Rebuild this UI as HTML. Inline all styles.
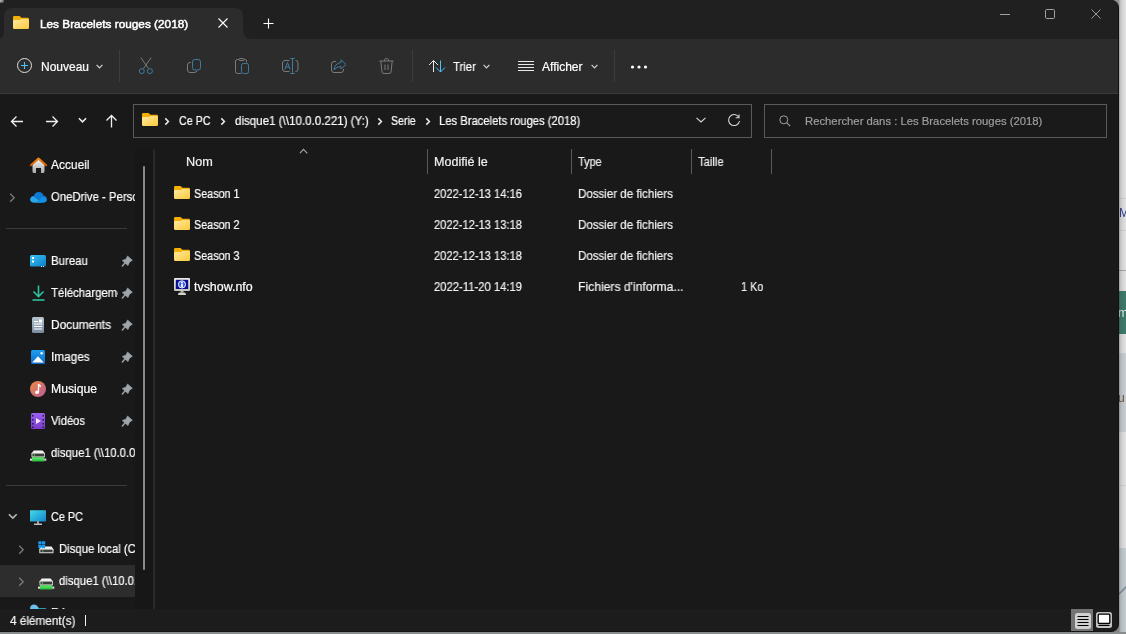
<!DOCTYPE html>
<html><head><meta charset="utf-8">
<style>
*{margin:0;padding:0;box-sizing:border-box}
html,body{width:1126px;height:634px;overflow:hidden;background:#e4e4e4;font-family:"Liberation Sans",sans-serif;color:#fff}
.a{position:absolute}
svg.a{overflow:visible}
.t{position:absolute;white-space:nowrap;line-height:16px;font-size:12px;color:#fff;-webkit-text-stroke:0.2px currentColor;will-change:transform}
#win{position:absolute;left:0;top:0;width:1119px;height:632px;background:#191919;border-radius:0 8px 8px 0;overflow:hidden;border-right:1px solid #121212;border-bottom:1px solid #141414}
.sep{position:absolute;width:1px;background:#3d3d3d}
.nav{font-size:12px}
.hd{color:#f0f0f0}
</style></head>
<body>
<!-- outside right strip -->
<div class="a" style="left:1110px;top:0;width:16px;height:634px;overflow:hidden;background:#e3e3e3">
  <div class="a" style="left:0;top:198px;width:16px;height:1px;background:#d2d2d2"></div>
  <div class="t" style="left:9px;top:205px;font-size:12px;color:#2a3a8a;-webkit-text-stroke:0">Mo</div>
  <div class="a" style="left:0;top:230px;width:16px;height:1px;background:#d2d2d2"></div>
  <div class="a" style="left:0;top:270px;width:16px;height:1px;background:#a8a8a8"></div>
  <div class="a" style="left:0;top:291px;width:16px;height:43px;background:#3b7b6a"></div>
  <div class="t" style="left:8px;top:305px;font-size:12px;color:#e8f0f0;-webkit-text-stroke:0">m</div>
  <div class="a" style="left:0;top:353px;width:16px;height:79px;background:#cacfd3"></div>
  <div class="t" style="left:8px;top:390px;font-size:12px;color:#6a5030;-webkit-text-stroke:0">u</div>
  <div class="a" style="left:0;top:485px;width:16px;height:1px;background:#d4d4d4"></div>
  <div class="a" style="left:0;top:548px;width:16px;height:86px;background:#c6cdd1"></div>
  <svg class="a" style="left:0;top:580px" width="16" height="20" viewBox="0 0 16 20"><path d="M8 15L17 6" stroke="#7f8ea2" stroke-width="1.6"/></svg>
  <div class="a" style="left:0;top:0;width:16px;height:634px;background:linear-gradient(90deg,rgba(50,50,50,.5) 0,rgba(50,50,50,.45) 9px,rgba(60,60,60,.22) 10px,rgba(60,60,60,.1) 12px,rgba(60,60,60,0) 16px)"></div>
</div>
<div class="a" style="left:0;top:632px;width:1126px;height:2px;background:#888c8c"></div>


<div id="win">
  <!-- TAB STRIP -->
  <div class="a" style="left:0;top:0;width:1119px;height:39px;background:#202020"></div>
  <div class="a" style="left:0;top:31px;width:260px;height:8px;background:#2c2c2c"></div>
  <div class="a" style="left:-4px;top:23px;width:8px;height:16px;background:#202020;border-radius:0 0 6px 0"></div>
  <div class="a" style="left:243px;top:23px;width:876px;height:16px;background:#202020;border-radius:0 0 0 8px"></div>
  <div class="a" style="left:4px;top:8px;width:239px;height:40px;background:#2c2c2c;border-radius:8px 8px 0 0"></div>
  <!-- tab folder icon -->
  <svg class="a" style="left:13px;top:16px" width="16" height="13" viewBox="0 0 16 13">
    <defs><linearGradient id="fg" x1="0" y1="0" x2="1" y2="1"><stop offset="0" stop-color="#ffeaa4"/><stop offset="1" stop-color="#fcc838"/></linearGradient></defs>
    <path d="M1.3 0H6.6L8.4 1.8H14.7Q16 1.8 16 3.1V7H0V1.3Q0 0 1.3 0Z" fill="#f2b008"/>
    <path d="M0 5.3Q0 4.1 1.2 4.1H7.2L8.2 3.1H14.7Q16 3.1 16 4.4V11.7Q16 13 14.7 13H1.3Q0 13 0 11.7Z" fill="url(#fg)"/>
  </svg>
  <div class="t" style="left:40px;top:16px;font-size:11.8px;-webkit-text-stroke:0.5px #fff">Les Bracelets rouges (2018)</div>
  <svg class="a" style="left:218px;top:18px" width="10" height="10" viewBox="0 0 10 10"><path d="M0.5 0.5L9.5 9.5M9.5 0.5L0.5 9.5" stroke="#fff" stroke-width="1.1"/></svg>
  <svg class="a" style="left:263px;top:18px" width="11" height="11" viewBox="0 0 11 11"><path d="M5.5 0.5V10.5M0.5 5.5H10.5" stroke="#fff" stroke-width="1.1"/></svg>
  <!-- caption buttons -->
  <svg class="a" style="left:1000px;top:14px" width="10" height="1" viewBox="0 0 10 1"><path d="M0 0.5H10" stroke="#a0a0a0" stroke-width="1"/></svg>
  <svg class="a" style="left:1045px;top:9px" width="10" height="10" viewBox="0 0 10 10"><rect x="0.5" y="0.5" width="9" height="9" rx="1.2" fill="none" stroke="#a0a0a0" stroke-width="1"/></svg>
  <svg class="a" style="left:1091px;top:9px" width="10" height="10" viewBox="0 0 10 10"><path d="M0.5 0.5L9.5 9.5M9.5 0.5L0.5 9.5" stroke="#9a9a9a" stroke-width="1"/></svg>

  <!-- COMMAND BAR -->
  <div class="a" style="left:0;top:39px;width:1119px;height:54px;background:#2c2c2c"></div>
  <div class="a" style="left:0;top:93px;width:1119px;height:1px;background:#3a3a3a"></div>
  <svg class="a" style="left:17px;top:58px" width="15" height="15" viewBox="0 0 15 15"><circle cx="7.5" cy="7.5" r="7" fill="none" stroke="#e0e0e0" stroke-width="1"/><path d="M7.5 4V11M4 7.5H11" stroke="#4cc2ff" stroke-width="1.1"/></svg>
  <div class="t" style="transform:scaleX(0.998);transform-origin:0 0;font-size:12px;left:41px;top:59px">Nouveau</div>
  <svg class="a" style="left:96px;top:64px" width="7" height="5" viewBox="0 0 7 5"><path d="M0.6 0.9L3.5 3.8L6.4 0.9" fill="none" stroke="#d4d4d4" stroke-width="1.2"/></svg>
  <div class="sep" style="left:119px;top:50px;height:32px"></div>
  <!-- scissors -->
  <svg class="a" style="left:138px;top:57px" width="16" height="17" viewBox="0 0 16 17"><path d="M2.8 0.5L10.5 11.5M13.2 0.5L5.5 11.5" stroke="#7a7a7a" stroke-width="1"/><circle cx="3.8" cy="14.1" r="2.5" fill="none" stroke="#3f7aa0" stroke-width="1"/><circle cx="11.9" cy="14.1" r="2.5" fill="none" stroke="#3f7aa0" stroke-width="1"/></svg>
  <!-- copy -->
  <svg class="a" style="left:187px;top:59px" width="15" height="15" viewBox="0 0 15 15"><path d="M4 3.5H3Q0.5 3.5 0.5 6V11Q0.5 13.5 3 13.5H7Q9.5 13.5 10 12" fill="none" stroke="#7a7a7a" stroke-width="1"/><rect x="5.5" y="0.5" width="8" height="10.5" rx="2.3" fill="none" stroke="#3f7aa0" stroke-width="1"/></svg>
  <!-- paste -->
  <svg class="a" style="left:235px;top:58px" width="15" height="17" viewBox="0 0 15 17"><path d="M6 15.5H2.5Q0.5 15.5 0.5 13.5V3Q0.5 1.5 2.5 1.5H4M9 1.5H10.5Q11.5 1.5 11.5 3V4.5" fill="none" stroke="#7a7a7a" stroke-width="1"/><rect x="4" y="0.5" width="5" height="2" rx="1" fill="none" stroke="#7a7a7a" stroke-width="1"/><rect x="6.5" y="5.5" width="7" height="10" rx="1.8" fill="none" stroke="#3f7aa0" stroke-width="1"/></svg>
  <!-- rename -->
  <svg class="a" style="left:282px;top:58px" width="17" height="17" viewBox="0 0 17 17"><path d="M7.5 2.5H3Q0.5 2.5 0.5 5V11Q0.5 13.5 3 13.5H7.5M13.5 2.5Q16 2.5 16 5V11Q16 13.5 13.5 13.5" fill="none" stroke="#7a7a7a" stroke-width="1"/><path d="M10.5 0.5V15.5M8.3 0.5H12.7M8.3 15.5H12.7M2.8 11.5L5.5 4.5L8.2 11.5M3.8 9H7.2" fill="none" stroke="#3f7aa0" stroke-width="1"/></svg>
  <!-- share -->
  <svg class="a" style="left:331px;top:59px" width="16" height="15" viewBox="0 0 16 15"><path d="M5 2.5H3Q0.5 2.5 0.5 5V11Q0.5 13.5 3 13.5H10Q12.5 13.5 12.5 11V10" fill="none" stroke="#7a7a7a" stroke-width="1"/><path d="M10 0.8L15 5.5L10 10V7.5Q5.5 7.5 3 11Q3.5 4.5 10 3.5Z" fill="none" stroke="#3f7aa0" stroke-width="1" stroke-linejoin="round"/></svg>
  <!-- delete -->
  <svg class="a" style="left:379px;top:58px" width="15" height="17" viewBox="0 0 15 17"><path d="M0.5 3H14.5M5.5 3V1.8Q5.5 0.5 7.5 0.5Q9.5 0.5 9.5 1.8V3M1.8 3L3 14Q3.2 15.5 5 15.5H10Q11.8 15.5 12 14L13.2 3M6 6.5V12M9 6.5V12" fill="none" stroke="#7a7a7a" stroke-width="1"/></svg>
  <div class="sep" style="left:412px;top:50px;height:32px"></div>
  <!-- trier -->
  <svg class="a" style="left:428px;top:60px" width="18" height="13" viewBox="0 0 18 13"><path d="M5.5 0.5V12M1 5L5.5 0.5L10 5" fill="none" stroke="#e8e8e8" stroke-width="1"/><path d="M12.5 0.5V12M8 7.5L12.5 12L17 7.5" fill="none" stroke="#4cc2ff" stroke-width="1"/></svg>
  <div class="t" style="transform:scaleX(0.940);transform-origin:0 0;font-size:12px;left:453px;top:59px">Trier</div>
  <svg class="a" style="left:483px;top:64px" width="7" height="5" viewBox="0 0 7 5"><path d="M0.6 0.9L3.5 3.8L6.4 0.9" fill="none" stroke="#d4d4d4" stroke-width="1.2"/></svg>
  <!-- afficher -->
  <svg class="a" style="left:518px;top:61px" width="16" height="11" viewBox="0 0 16 11"><path d="M0 0.5H16M0 3.5H16M0 6.5H16M0 9.5H16" stroke="#e8e8e8" stroke-width="1"/></svg>
  <div class="t" style="transform:scaleX(1.002);transform-origin:0 0;font-size:12px;left:542px;top:59px">Afficher</div>
  <svg class="a" style="left:591px;top:64px" width="7" height="5" viewBox="0 0 7 5"><path d="M0.6 0.9L3.5 3.8L6.4 0.9" fill="none" stroke="#d4d4d4" stroke-width="1.2"/></svg>
  <div class="sep" style="left:614px;top:50px;height:32px"></div>
  <svg class="a" style="left:630px;top:65px" width="18" height="4" viewBox="0 0 18 4"><circle cx="2.5" cy="2" r="1.6" fill="#fff"/><circle cx="9" cy="2" r="1.6" fill="#fff"/><circle cx="15.5" cy="2" r="1.6" fill="#fff"/></svg>

  <!-- ADDRESS ROW -->
  <svg class="a" style="left:10px;top:115px" width="14" height="13" viewBox="0 0 14 13"><path d="M1.8 6.5H13M6.5 1.5L1.5 6.5L6.5 11.5" fill="none" stroke="#f0f0f0" stroke-width="1.3"/></svg>
  <svg class="a" style="left:45px;top:115px" width="14" height="13" viewBox="0 0 14 13"><path d="M1 6.5H12.2M7.5 1.5L12.5 6.5L7.5 11.5" fill="none" stroke="#f0f0f0" stroke-width="1.3"/></svg>
  <svg class="a" style="left:78px;top:117px" width="10" height="7" viewBox="0 0 10 7"><path d="M0.9 1.3L4.5 4.9L8.1 1.3" fill="none" stroke="#f0f0f0" stroke-width="1.5"/></svg>
  <svg class="a" style="left:105px;top:114px" width="13" height="14" viewBox="0 0 13 14"><path d="M6.5 1.8V13.5M1.5 6.5L6.5 1.5L11.5 6.5" fill="none" stroke="#f0f0f0" stroke-width="1.3"/></svg>
  <div class="a" style="left:133px;top:104px;width:619px;height:34px;border:1px solid #5a5a5a;background:#1a1a1a"></div>
  <svg class="a" style="left:142px;top:113px" width="16" height="13" viewBox="0 0 16 13">
    <path d="M1.3 0H6.6L8.4 1.8H14.7Q16 1.8 16 3.1V7H0V1.3Q0 0 1.3 0Z" fill="#f2b008"/>
    <path d="M0 5.3Q0 4.1 1.2 4.1H7.2L8.2 3.1H14.7Q16 3.1 16 4.4V11.7Q16 13 14.7 13H1.3Q0 13 0 11.7Z" fill="url(#fg)"/>
  </svg>
  <svg class="a" style="left:164px;top:117px" width="6" height="9" viewBox="0 0 6 9"><path d="M1.3 1.4L4.4 4.5L1.3 7.6" fill="none" stroke="#ececec" stroke-width="1.5"/></svg>
  <div class="t" style="transform:scaleX(0.891);transform-origin:0 0;font-size:12px;left:179px;top:113px">Ce PC</div>
  <svg class="a" style="left:220px;top:117px" width="6" height="9" viewBox="0 0 6 9"><path d="M1.3 1.4L4.4 4.5L1.3 7.6" fill="none" stroke="#ececec" stroke-width="1.5"/></svg>
  <div class="t" style="transform:scaleX(0.964);transform-origin:0 0;font-size:12px;left:234.5px;top:113px">disque1 (\\10.0.0.221) (Y:)</div>
  <svg class="a" style="left:377px;top:117px" width="6" height="9" viewBox="0 0 6 9"><path d="M1.3 1.4L4.4 4.5L1.3 7.6" fill="none" stroke="#ececec" stroke-width="1.5"/></svg>
  <div class="t" style="transform:scaleX(0.882);transform-origin:0 0;font-size:12px;left:391px;top:113px">Serie</div>
  <svg class="a" style="left:425px;top:117px" width="6" height="9" viewBox="0 0 6 9"><path d="M1.3 1.4L4.4 4.5L1.3 7.6" fill="none" stroke="#ececec" stroke-width="1.5"/></svg>
  <div class="t" style="transform:scaleX(0.937);transform-origin:0 0;font-size:12px;left:439px;top:113px">Les Bracelets rouges (2018)</div>
  <svg class="a" style="left:696px;top:117px" width="10" height="6" viewBox="0 0 10 6"><path d="M0.5 0.8L5 5L9.5 0.8" fill="none" stroke="#d8d8d8" stroke-width="1.1"/></svg>
  <svg class="a" style="left:727px;top:114px" width="14" height="13" viewBox="0 0 14 13"><path d="M11.8 3.2A5.5 5.5 0 1 0 12.5 7" fill="none" stroke="#d8d8d8" stroke-width="1.1"/><path d="M12 0.5V3.8H8.7" fill="none" stroke="#d8d8d8" stroke-width="1.1"/></svg>
  <div class="a" style="left:764px;top:104px;width:343px;height:34px;border:1px solid #5a5a5a;background:#1a1a1a"></div>
  <svg class="a" style="left:779px;top:115px" width="12" height="12" viewBox="0 0 12 12"><circle cx="4.8" cy="4.8" r="4" fill="none" stroke="#a0a0a0" stroke-width="1"/><path d="M7.8 7.8L11.2 11.2" stroke="#a0a0a0" stroke-width="1.1"/></svg>
  <div class="t" style="left:805px;top:113px;color:#9e9e9e;font-size:11.3px">Rechercher dans : Les Bracelets rouges (2018)</div>


  <!-- NAV PANE -->
    <!-- nav scroll track + separator -->
  <div class="a" style="left:135px;top:149px;width:18px;height:460px;background:#171717"></div>
  <div class="a" style="left:143px;top:166px;width:2px;height:404px;background:#8a8a8a;border-radius:1px"></div>
  <div class="a" style="left:153px;top:149px;width:2px;height:460px;background:#2a2a2a"></div>
  <!-- Accueil -->
  <svg class="a" style="left:30px;top:157px" width="17" height="17" viewBox="0 0 17 17">
    <defs><linearGradient id="hg" x1="0" y1="0" x2="0" y2="1"><stop offset="0" stop-color="#f0f0f0"/><stop offset="1" stop-color="#a8a8a8"/></linearGradient>
    <linearGradient id="ob" x1="0" y1="0" x2="0" y2="1"><stop offset="0" stop-color="#f08a10"/><stop offset="1" stop-color="#e05a00"/></linearGradient></defs>
    <path d="M2.5 7.5L8.5 2.5L14.5 7.5V14.5Q14.5 16 13 16H11V11H6V16H4Q2.5 16 2.5 14.5Z" fill="url(#hg)"/>
    <path d="M0.8 8.3L8.5 1.5L16.2 8.3" fill="none" stroke="url(#ob)" stroke-width="2" stroke-linecap="round" stroke-linejoin="round"/>
  </svg>
  <div class="t nav" style="transform:scaleX(0.995);transform-origin:0 0;left:51px;top:157px;font-size:12px">Accueil</div>
  <!-- OneDrive -->
  <svg class="a" style="left:9px;top:193px" width="7" height="10" viewBox="0 0 7 10"><path d="M1.2 0.8L5.2 4.8L1.2 8.8" fill="none" stroke="#7c7c7c" stroke-width="1.3"/></svg>
  <svg class="a" style="left:30px;top:191px" width="17" height="12" viewBox="0 0 17 12">
    <path d="M4 11.5Q0.3 11.5 0.3 8.3Q0.3 5.2 3.8 5Q5 1 9 1Q12.5 1 13.5 4.5Q16.7 5 16.7 8.2Q16.7 11.5 13.3 11.5Z" fill="#0f7ad4"/>
    <path d="M4 11.5Q0.3 11.5 0.3 8.3Q0.3 6 3 5.3L12 11.5Z" fill="#28a8ea"/>
    <path d="M6 11.5L12.5 6Q16.7 5.8 16.7 8.8Q16.7 11.5 13.3 11.5Z" fill="#1490df"/>
  </svg>
  <div class="a" style="left:51px;top:189px;width:84px;height:18px;overflow:hidden"><div class="t nav" style="left:0;top:0;font-size:12.2px;transform:scaleX(0.93);transform-origin:0 0">OneDrive - Personnel</div></div>
  <div class="a" style="left:6px;top:485px;width:121px;height:1px;background:#3a3a3a"></div>
  <div class="a" style="left:6px;top:228px;width:121px;height:1px;background:#3a3a3a"></div>
  <!-- Bureau -->
  <svg class="a" style="left:30px;top:255px" width="16" height="12" viewBox="0 0 16 12">
    <defs><linearGradient id="bg1" x1="0" y1="0" x2="1" y2="1"><stop offset="0" stop-color="#3cc4f4"/><stop offset="1" stop-color="#0a7cc8"/></linearGradient></defs>
    <rect x="0" y="0" width="16" height="11.5" rx="1.5" fill="url(#bg1)"/>
    <rect x="2" y="2" width="2" height="2" fill="#fff"/><rect x="2" y="5.5" width="2" height="2" fill="#fff"/>
    <rect x="11" y="11" width="1" height="1" fill="#ddd"/><rect x="13" y="11" width="1" height="1" fill="#ddd"/>
  </svg>
  <div class="t nav" style="transform:scaleX(0.955);transform-origin:0 0;left:51px;top:253px;font-size:12px">Bureau</div>
  <!-- Telechargements -->
  <svg class="a" style="left:32px;top:285px" width="13" height="16" viewBox="0 0 13 16"><path d="M6.5 0.5V11M1.5 6.5L6.5 11.5L11.5 6.5" fill="none" stroke="#2ec29c" stroke-width="1.6"/><path d="M0.5 15H12.5" stroke="#2ec29c" stroke-width="1.6"/></svg>
  <div class="a" style="left:51px;top:285px;width:67px;height:18px;overflow:hidden"><div class="t nav" style="left:0;top:0;font-size:12.2px;transform:scaleX(0.93);transform-origin:0 0">Téléchargements</div></div>
  <!-- Documents -->
  <svg class="a" style="left:32px;top:317px" width="13" height="16" viewBox="0 0 13 16">
    <defs><linearGradient id="dg" x1="0" y1="0" x2="0" y2="1"><stop offset="0" stop-color="#b8c4d0"/><stop offset="1" stop-color="#7a8ca0"/></linearGradient></defs>
    <rect x="0" y="0" width="12" height="16" rx="1.5" fill="url(#dg)"/>
    <path d="M2 4.5H6M2 7H10M2 9.5H10M2 12H10" stroke="#fff" stroke-width="1"/><rect x="7" y="2.5" width="3" height="3" fill="#fff"/>
  </svg>
  <div class="t nav" style="transform:scaleX(0.989);transform-origin:0 0;left:51px;top:317px;font-size:12px">Documents</div>
  <!-- Images -->
  <svg class="a" style="left:31px;top:350px" width="15" height="15" viewBox="0 0 15 15">
    <defs><linearGradient id="ig" x1="0" y1="0" x2="0" y2="1"><stop offset="0" stop-color="#1e9ef0"/><stop offset="1" stop-color="#0c6cc8"/></linearGradient></defs>
    <rect x="0" y="0" width="14" height="14" rx="1.5" fill="url(#ig)"/>
    <path d="M1.2 12.5L7 6.2L12.8 12.5Z" fill="#fff"/><circle cx="10.6" cy="3.2" r="1.2" fill="#fff"/>
  </svg>
  <div class="t nav" style="transform:scaleX(0.984);transform-origin:0 0;left:51px;top:349px;font-size:12px">Images</div>
  <!-- Musique -->
  <svg class="a" style="left:30px;top:381px" width="16" height="16" viewBox="0 0 16 16">
    <defs><linearGradient id="mg" x1="0" y1="0" x2="1" y2="1"><stop offset="0" stop-color="#f08a40"/><stop offset="1" stop-color="#b85a98"/></linearGradient></defs>
    <circle cx="8" cy="8" r="8" fill="url(#mg)"/>
    <path d="M8.5 3V11" stroke="#fff" stroke-width="1.3"/><ellipse cx="7" cy="11.2" rx="2" ry="1.7" fill="#fff"/><path d="M8.5 3Q9 5 11 5.5" fill="none" stroke="#fff" stroke-width="1.3"/>
  </svg>
  <div class="t nav" style="transform:scaleX(1.016);transform-origin:0 0;left:51px;top:381px;font-size:12px">Musique</div>
  <!-- Videos -->
  <svg class="a" style="left:31px;top:413px" width="15" height="16" viewBox="0 0 15 16">
    <defs><linearGradient id="vg" x1="0" y1="0" x2="0" y2="1"><stop offset="0" stop-color="#9a5ef0"/><stop offset="1" stop-color="#7a3cc8"/></linearGradient></defs>
    <rect x="0" y="0" width="14" height="16" rx="1.5" fill="url(#vg)"/>
    <rect x="1" y="2" width="1.5" height="1.5" fill="#2a1650"/><rect x="1" y="6" width="1.5" height="1.5" fill="#2a1650"/><rect x="1" y="10" width="1.5" height="1.5" fill="#2a1650"/><rect x="1" y="13.5" width="1.5" height="1.5" fill="#2a1650"/>
    <rect x="11.5" y="2" width="1.5" height="1.5" fill="#2a1650"/><rect x="11.5" y="6" width="1.5" height="1.5" fill="#2a1650"/><rect x="11.5" y="10" width="1.5" height="1.5" fill="#2a1650"/><rect x="11.5" y="13.5" width="1.5" height="1.5" fill="#2a1650"/>
    <path d="M5 5V11L10 8Z" fill="#f0e8ff"/>
  </svg>
  <div class="t nav" style="transform:scaleX(0.930);transform-origin:0 0;left:51px;top:413px;font-size:12px">Vidéos</div>
  <!-- disque1 quick -->
  <svg class="a" style="left:30px;top:449.5px" width="17" height="12" viewBox="0 0 17 12">
    <defs><linearGradient id="drg" x1="0" y1="0" x2="0" y2="1"><stop offset="0" stop-color="#fafafa"/><stop offset="1" stop-color="#cfcfcf"/></linearGradient><linearGradient id="grg" x1="0" y1="0" x2="0" y2="1"><stop offset="0" stop-color="#66f070"/><stop offset="1" stop-color="#28b83a"/></linearGradient></defs>
    <path d="M3.8 0.5H12.5L15 3.2V7.3H1.5V3.2Z" fill="url(#drg)"/><rect x="2.4" y="3.6" width="11.8" height="2.8" fill="#3c3c3c"/><circle cx="4.4" cy="5" r="0.8" fill="#3cf04a"/>
    <rect x="2" y="7.2" width="12.3" height="4.3" fill="url(#grg)"/><rect x="0" y="8.6" width="2" height="2.1" fill="#e0e0e0"/><rect x="14.3" y="8.6" width="2" height="2.1" fill="#e0e0e0"/>
  </svg>
  <div class="a" style="left:51px;top:445px;width:84px;height:18px;overflow:hidden"><div class="t nav" style="left:0;top:0;font-size:12.2px;transform:scaleX(0.93);transform-origin:0 0">disque1 (\\10.0.0.221) (Y:)</div></div>
  <!-- pins -->
    <svg class="a" style="left:121px;top:255px" width="13" height="13" viewBox="0 0 13 13"><path d="M6.6 1L11.4 5.3L8.6 7L7 10.6L1.2 5.5L4.8 4.2Z" fill="#9ea6ac" stroke="#9ea6ac" stroke-width="0.6" stroke-linejoin="round"/><path d="M4 8L1.3 11" stroke="#9ea6ac" stroke-width="1.4" stroke-linecap="round"/></svg>
  <svg class="a" style="left:121px;top:287px" width="13" height="13" viewBox="0 0 13 13"><path d="M6.6 1L11.4 5.3L8.6 7L7 10.6L1.2 5.5L4.8 4.2Z" fill="#9ea6ac" stroke="#9ea6ac" stroke-width="0.6" stroke-linejoin="round"/><path d="M4 8L1.3 11" stroke="#9ea6ac" stroke-width="1.4" stroke-linecap="round"/></svg>
  <svg class="a" style="left:121px;top:319px" width="13" height="13" viewBox="0 0 13 13"><path d="M6.6 1L11.4 5.3L8.6 7L7 10.6L1.2 5.5L4.8 4.2Z" fill="#9ea6ac" stroke="#9ea6ac" stroke-width="0.6" stroke-linejoin="round"/><path d="M4 8L1.3 11" stroke="#9ea6ac" stroke-width="1.4" stroke-linecap="round"/></svg>
  <svg class="a" style="left:121px;top:351px" width="13" height="13" viewBox="0 0 13 13"><path d="M6.6 1L11.4 5.3L8.6 7L7 10.6L1.2 5.5L4.8 4.2Z" fill="#9ea6ac" stroke="#9ea6ac" stroke-width="0.6" stroke-linejoin="round"/><path d="M4 8L1.3 11" stroke="#9ea6ac" stroke-width="1.4" stroke-linecap="round"/></svg>
  <svg class="a" style="left:121px;top:383px" width="13" height="13" viewBox="0 0 13 13"><path d="M6.6 1L11.4 5.3L8.6 7L7 10.6L1.2 5.5L4.8 4.2Z" fill="#9ea6ac" stroke="#9ea6ac" stroke-width="0.6" stroke-linejoin="round"/><path d="M4 8L1.3 11" stroke="#9ea6ac" stroke-width="1.4" stroke-linecap="round"/></svg>
  <svg class="a" style="left:121px;top:415px" width="13" height="13" viewBox="0 0 13 13"><path d="M6.6 1L11.4 5.3L8.6 7L7 10.6L1.2 5.5L4.8 4.2Z" fill="#9ea6ac" stroke="#9ea6ac" stroke-width="0.6" stroke-linejoin="round"/><path d="M4 8L1.3 11" stroke="#9ea6ac" stroke-width="1.4" stroke-linecap="round"/></svg>

  <!-- Ce PC -->
  <svg class="a" style="left:8px;top:513px" width="10" height="7" viewBox="0 0 10 7"><path d="M0.9 1.2L4.8 5.1L8.7 1.2" fill="none" stroke="#b8b8b8" stroke-width="1.6"/></svg>
  <svg class="a" style="left:30px;top:510px" width="16" height="15" viewBox="0 0 16 15">
    <defs><linearGradient id="pcg" x1="0" y1="0" x2="1" y2="1"><stop offset="0" stop-color="#44dce8"/><stop offset="1" stop-color="#1284cc"/></linearGradient></defs>
    <rect x="0" y="0.2" width="16" height="11.4" rx="0.6" fill="url(#pcg)"/><rect x="7" y="11" width="2" height="3" fill="#9a9a9a"/><rect x="4" y="13.5" width="8" height="1.5" fill="#c0c0c0"/>
  </svg>
  <div class="t nav" style="transform:scaleX(0.903);transform-origin:0 0;left:51px;top:509px;font-size:12px">Ce PC</div>
  <!-- Disque local -->
  <svg class="a" style="left:18px;top:545px" width="7" height="10" viewBox="0 0 7 10"><path d="M1.2 0.8L5.2 4.8L1.2 8.8" fill="none" stroke="#7c7c7c" stroke-width="1.3"/></svg>
  <svg class="a" style="left:37.5px;top:540.5px" width="16" height="13" viewBox="0 0 16 13">
    <path d="M2.8 5.5H13.5L15.5 8.2V12.3H1.3V8.2Z" fill="url(#drg)"/><rect x="2.3" y="8.6" width="12.2" height="2.6" fill="#3c3c3c"/><circle cx="4.8" cy="9.9" r="0.7" fill="#3cf04a"/>
    <rect x="0.3" y="0.3" width="3.2" height="3.2" fill="#1a9af0"/><rect x="4" y="0.3" width="3.2" height="3.2" fill="#1a9af0"/><rect x="0.3" y="4" width="3.2" height="3.2" fill="#1a9af0"/><rect x="4" y="4" width="3.2" height="3.2" fill="#1a9af0"/>
  </svg>
  <div class="a" style="left:59px;top:541px;width:76px;height:18px;overflow:hidden"><div class="t nav" style="left:0;top:0;font-size:12.2px;transform:scaleX(0.93);transform-origin:0 0">Disque local (C:)</div></div>
  <!-- disque1 selected -->
  <div class="a" style="left:0;top:565px;width:135px;height:32px;background:#2d2d2d"></div>
  <svg class="a" style="left:18px;top:577px" width="7" height="10" viewBox="0 0 7 10"><path d="M1.2 0.8L5.2 4.8L1.2 8.8" fill="none" stroke="#7c7c7c" stroke-width="1.3"/></svg>
  <svg class="a" style="left:38px;top:577.5px" width="17" height="12" viewBox="0 0 17 12">
    <path d="M3.8 0.5H12.5L15 3.2V7.3H1.5V3.2Z" fill="url(#drg)"/><rect x="2.4" y="3.6" width="11.8" height="2.8" fill="#3c3c3c"/><circle cx="4.4" cy="5" r="0.8" fill="#3cf04a"/>
    <rect x="2" y="7.2" width="12.3" height="4.3" fill="url(#grg)"/><rect x="0" y="8.6" width="2" height="2.1" fill="#e0e0e0"/><rect x="14.3" y="8.6" width="2" height="2.1" fill="#e0e0e0"/>
  </svg>
  <div class="a" style="left:59px;top:573px;width:76px;height:18px;overflow:hidden"><div class="t nav" style="left:0;top:0;font-size:12.2px;transform:scaleX(0.93);transform-origin:0 0">disque1 (\\10.0.0.221) (Y:)</div></div>
  <!-- Reseau partial -->
  <svg class="a" style="left:29px;top:604px" width="18" height="14" viewBox="0 0 18 14"><path d="M1 5Q1 0.5 5 0.5Q8 0.5 10 4.5V6H1Z" fill="#6cc0ec"/><rect x="9.5" y="4" width="7.5" height="1.2" fill="#2a9ab0"/></svg>
  <div class="t nav" style="left:51px;top:604px;font-size:11.8px">Réseau</div>


  <!-- CONTENT -->
  
  <!-- header -->
  <div class="t hd" style="transform:scaleX(1.056);transform-origin:0 0;left:186px;top:154px;font-size:12px">Nom</div>
  <svg class="a" style="left:299px;top:148px" width="10" height="7" viewBox="0 0 10 7"><path d="M1 5.2L4.5 1.4L8.3 5.4" fill="none" stroke="#a8a8a8" stroke-width="1.1"/></svg>
  <div class="sep" style="left:427px;top:149px;height:25px;background:#5a5a5a"></div>
  <div class="t hd" style="transform:scaleX(1.045);transform-origin:0 0;left:434px;top:154px;font-size:12px">Modifié le</div>
  <div class="sep" style="left:571px;top:149px;height:25px;background:#5a5a5a"></div>
  <div class="t hd" style="transform:scaleX(0.908);transform-origin:0 0;left:578px;top:154px;font-size:12px">Type</div>
  <div class="sep" style="left:691px;top:149px;height:25px;background:#5a5a5a"></div>
  <div class="t hd" style="transform:scaleX(0.937);transform-origin:0 0;left:698px;top:154px;font-size:12px">Taille</div>
  <div class="sep" style="left:771px;top:149px;height:25px;background:#5a5a5a"></div>
  <svg class="a" style="left:174px;top:186px" width="16" height="13" viewBox="0 0 16 13">
    <path d="M1.3 0H6.6L8.4 1.8H14.7Q16 1.8 16 3.1V7H0V1.3Q0 0 1.3 0Z" fill="#f2b008"/>
    <path d="M0 5.3Q0 4.1 1.2 4.1H7.2L8.2 3.1H14.7Q16 3.1 16 4.4V11.7Q16 13 14.7 13H1.3Q0 13 0 11.7Z" fill="url(#fg)"/>
  </svg>
  <div class="t" style="transform:scaleX(0.877);transform-origin:0 0;left:194px;top:186px;font-size:12.3px">Season 1</div>
  <div class="t" style="transform:scaleX(0.905);transform-origin:0 0;left:434px;top:186px;font-size:12.3px;color:#f2f2f2">2022-12-13 14:16</div>
  <div class="t" style="transform:scaleX(0.938);transform-origin:0 0;left:578px;top:186px;font-size:12.3px;color:#f2f2f2">Dossier de fichiers</div>
  <svg class="a" style="left:174px;top:217px" width="16" height="13" viewBox="0 0 16 13">
    <path d="M1.3 0H6.6L8.4 1.8H14.7Q16 1.8 16 3.1V7H0V1.3Q0 0 1.3 0Z" fill="#f2b008"/>
    <path d="M0 5.3Q0 4.1 1.2 4.1H7.2L8.2 3.1H14.7Q16 3.1 16 4.4V11.7Q16 13 14.7 13H1.3Q0 13 0 11.7Z" fill="url(#fg)"/>
  </svg>
  <div class="t" style="transform:scaleX(0.877);transform-origin:0 0;left:194px;top:217px;font-size:12.3px">Season 2</div>
  <div class="t" style="transform:scaleX(0.905);transform-origin:0 0;left:434px;top:217px;font-size:12.3px;color:#f2f2f2">2022-12-13 13:18</div>
  <div class="t" style="transform:scaleX(0.938);transform-origin:0 0;left:578px;top:217px;font-size:12.3px;color:#f2f2f2">Dossier de fichiers</div>
  <svg class="a" style="left:174px;top:248px" width="16" height="13" viewBox="0 0 16 13">
    <path d="M1.3 0H6.6L8.4 1.8H14.7Q16 1.8 16 3.1V7H0V1.3Q0 0 1.3 0Z" fill="#f2b008"/>
    <path d="M0 5.3Q0 4.1 1.2 4.1H7.2L8.2 3.1H14.7Q16 3.1 16 4.4V11.7Q16 13 14.7 13H1.3Q0 13 0 11.7Z" fill="url(#fg)"/>
  </svg>
  <div class="t" style="transform:scaleX(0.877);transform-origin:0 0;left:194px;top:248px;font-size:12.3px">Season 3</div>
  <div class="t" style="transform:scaleX(0.905);transform-origin:0 0;left:434px;top:248px;font-size:12.3px;color:#f2f2f2">2022-12-13 13:18</div>
  <div class="t" style="transform:scaleX(0.938);transform-origin:0 0;left:578px;top:248px;font-size:12.3px;color:#f2f2f2">Dossier de fichiers</div>
  <svg class="a" style="left:174px;top:278px" width="16" height="17" viewBox="0 0 16 17">
    <defs><linearGradient id="ng" x1="0" y1="0" x2="0" y2="1"><stop offset="0" stop-color="#ecece6"/><stop offset="1" stop-color="#c4c4bc"/></linearGradient></defs>
    <rect x="0" y="0" width="16" height="13" rx="1" fill="url(#ng)"/><rect x="1.8" y="1.8" width="12.4" height="9.2" fill="#0a0c92"/>
    <circle cx="8" cy="6.4" r="3.6" fill="#3a62f2" stroke="#f4f4f4" stroke-width="1"/><rect x="7.1" y="5.6" width="1.8" height="3.4" fill="#fff"/><rect x="7.1" y="3.9" width="1.8" height="1.1" fill="#fff"/>
    <rect x="6.5" y="13" width="3" height="1.5" fill="#b8b8b0"/><path d="M4 17Q4 14.6 6 14.6H10Q12 14.6 12 17Z" fill="#d4d4cc"/>
  </svg>
  <div class="t" style="transform:scaleX(1.010);transform-origin:0 0;left:194px;top:279px;font-size:12.3px">tvshow.nfo</div>
  <div class="t" style="transform:scaleX(0.915);transform-origin:0 0;left:434px;top:279px;font-size:12.3px;color:#f2f2f2">2022-11-20 14:19</div>
  <div class="t" style="transform:scaleX(0.987);transform-origin:0 0;left:578px;top:279px;font-size:12.3px;color:#f2f2f2">Fichiers d'informa...</div>
  <div class="t" style="transform:scaleX(0.880);transform-origin:0 0;left:741px;top:279px;font-size:12.3px;color:#f2f2f2">1 Ko</div>


  <!-- STATUS -->
  <div class="a" style="left:0;top:609px;width:1119px;height:23px;background:#1c1c1c"></div>
  
  <div class="t" style="transform:scaleX(0.980);transform-origin:0 0;left:10px;top:613px;font-size:12px;color:#f4f4f4">4 élément(s)</div>
  <div class="a" style="left:85px;top:615px;width:1px;height:11px;background:#f2f2f2"></div>
  <div class="a" style="left:1071px;top:609px;width:22px;height:24px;background:#747474"></div>
  <svg class="a" style="left:1075px;top:613px" width="16" height="16" viewBox="0 0 16 16"><rect x="0" y="0" width="16" height="16" rx="2.5" fill="#d0d0d0"/><path d="M2.5 3.5H13.5M2.5 6.5H13.5M2.5 9.5H13.5M2.5 12.5H13.5" stroke="#000" stroke-width="1"/></svg>
  <svg class="a" style="left:1096px;top:612px" width="16" height="16" viewBox="0 0 16 16"><rect x="0" y="0" width="16" height="16" rx="2.5" fill="#c4c4c4"/><rect x="2.2" y="2.2" width="11.6" height="9.3" rx="1" fill="#fff" stroke="#000" stroke-width="1.3"/><path d="M2.5 13.5H13.5" stroke="#000" stroke-width="1"/></svg>

</div>
<div class="a" style="left:0;top:0;width:4px;height:3px;background:radial-gradient(ellipse at 0 0,#c0c0c0 0,#a0a0a0 35%,rgba(32,32,32,0) 100%)"></div>
</body></html>
